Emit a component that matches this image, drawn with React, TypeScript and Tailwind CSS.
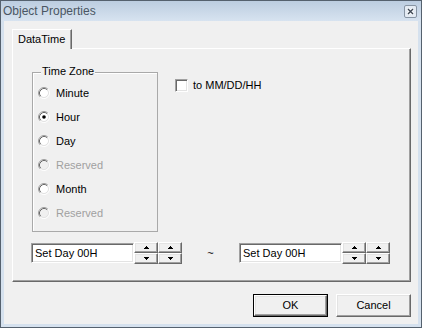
import React from 'react';

// classic 3D bevels
const raised =
  'bg-[#f0f0f0] border border-t-white border-l-white border-r-[#696969] border-b-[#696969] shadow-[inset_-1px_-1px_0_#a0a0a0,inset_1px_1px_0_#e3e3e3]';
const sunken =
  'bg-white border border-t-[#a0a0a0] border-l-[#a0a0a0] border-r-white border-b-white shadow-[inset_1px_1px_0_#696969,inset_-1px_-1px_0_#e3e3e3]';

const Radio = ({ checked, disabled }: { checked?: boolean; disabled?: boolean }) => (
  <svg width="12" height="12" viewBox="0 0 12 12" className="shrink-0">
    <circle cx="6" cy="6" r="4" fill={disabled ? '#f0f0f0' : '#fff'} />
    <path d="M2.11 9.89 A5.5 5.5 0 0 1 9.89 2.11" fill="none" stroke="#a0a0a0" />
    <path d="M9.89 2.11 A5.5 5.5 0 0 1 2.11 9.89" fill="none" stroke="#fff" />
    <path d="M2.82 9.18 A4.5 4.5 0 0 1 9.18 2.82" fill="none" stroke="#696969" />
    <path d="M9.18 2.82 A4.5 4.5 0 0 1 2.82 9.18" fill="none" stroke="#e3e3e3" />
    {checked && <circle cx="6" cy="6" r="1.8" fill="#000" />}
  </svg>
);

const Arrow = ({ up }: { up?: boolean }) => (
  <svg width="5" height="3" viewBox="0 0 5 3" shapeRendering="crispEdges">
    {up ? (
      <>
        <rect x="2" y="0" width="1" height="1" fill="#000" />
        <rect x="1" y="1" width="3" height="1" fill="#000" />
        <rect x="0" y="2" width="5" height="1" fill="#000" />
      </>
    ) : (
      <>
        <rect x="0" y="0" width="5" height="1" fill="#000" />
        <rect x="1" y="1" width="3" height="1" fill="#000" />
        <rect x="2" y="2" width="1" height="1" fill="#000" />
      </>
    )}
  </svg>
);

const Spin = () => (
  <div className="flex flex-col w-[24px]">
    <div className={`${raised} h-[11px] flex items-center justify-center`}><Arrow up /></div>
    <div className={`${raised} h-[11px] flex items-center justify-center`}><Arrow /></div>
  </div>
);

const DateField = () => (
  <div className="flex items-start">
    <div className={`${sunken} w-[103px] h-[20px] mt-[1px] flex items-center pl-[3px] text-[11px] text-black`}>
      Set Day 00H
    </div>
    <Spin />
    <Spin />
  </div>
);

const options = [
  { label: 'Minute' },
  { label: 'Hour', checked: true },
  { label: 'Day' },
  { label: 'Reserved', disabled: true },
  { label: 'Month' },
  { label: 'Reserved', disabled: true },
];

const CloseBox = () => (
  <svg width="13" height="13" viewBox="0 0 13 13">
    <rect x="0.5" y="0.5" width="12" height="12" rx="1.5" fill="#e4ebf3" stroke="#8794a3" />
    <path d="M4 4 L9 9 M9 4 L4 9" stroke="#fff" strokeWidth="3" />
    <path d="M4 4 L9 9 M9 4 L4 9" stroke="#3d4753" strokeWidth="1.4" />
  </svg>
);

const App: React.FC = () => {
  return (
    <div className="w-[422px] h-[328px] border border-[#55616e] bg-[#d5e1ee] flex flex-col font-['Liberation_Sans',Arial,sans-serif]">
      {/* Title bar */}
      <div className="h-[20px] flex items-center justify-between pl-[2px] pr-[4px] bg-linear-to-b from-[#bccde0] to-[#d7e3f0]">
        <span className="text-[12px] text-[#4a5663] leading-none">Object Properties</span>
        <CloseBox />
      </div>

      {/* Client */}
      <div className="flex-1 mx-[3px] mb-[3px] bg-[#f0f0f0] flex flex-col pt-[8px] pl-[8px] pr-[7px]">
        {/* Tab */}
        <div className="self-start relative z-10 -mb-px h-[20px] w-[60px] bg-[#f0f0f0] border-l border-t border-l-white border-t-white border-r border-r-[#696969] shadow-[inset_-1px_0_0_#a0a0a0] flex items-center pl-[5px] pb-[1px] text-[11px] text-black">
          DataTime
        </div>

        {/* Tab panel */}
        <div className="h-[234px] border border-t-white border-l-white border-r-[#696969] border-b-[#696969] shadow-[inset_-1px_-1px_0_#a0a0a0] pt-[23px] pl-[19px] flex flex-col">
          <div className="flex items-start">
            {/* Group box */}
            <div className="relative w-[126px] h-[160px] border border-[#a9a9a9] shadow-[inset_1px_1px_0_#fff] pt-[8px] pl-[5px]">
              <span className="absolute left-[8px] top-[-8px] px-[1px] bg-[#f0f0f0] text-[11px] leading-[13px] text-black">
                Time Zone
              </span>
              {options.map((o, i) => (
                <div key={i} className="h-[24px] flex items-center gap-[6px]">
                  <Radio checked={o.checked} disabled={o.disabled} />
                  <span className={`text-[11px] ${o.disabled ? 'text-[#a0a0a0]' : 'text-black'}`}>{o.label}</span>
                </div>
              ))}
            </div>

            {/* Checkbox */}
            <div className="ml-[17px] mt-[5px] flex items-center gap-[5px]">
              <div className={`${sunken} w-[13px] h-[13px]`} />
              <span className="text-[11px] text-black">to MM/DD/HH</span>
            </div>
          </div>

          <div className="mt-[10px] -ml-px flex items-start">
            <DateField />
            <div className="w-[57px] h-[22px] flex items-center justify-center text-[11px] text-black">~</div>
            <DateField />
          </div>
        </div>

        {/* Buttons */}
        <div className="mt-[12px] flex justify-end gap-[8px]">
          <div className="w-[75px] h-[23px] border border-black">
            <div className={`${raised} w-full h-full flex items-center justify-center text-[11px] text-black`}>OK</div>
          </div>
          <div className={`${raised} w-[75px] h-[23px] flex items-center justify-center text-[11px] text-black`}>Cancel</div>
        </div>
      </div>
    </div>
  );
};

export default App;
